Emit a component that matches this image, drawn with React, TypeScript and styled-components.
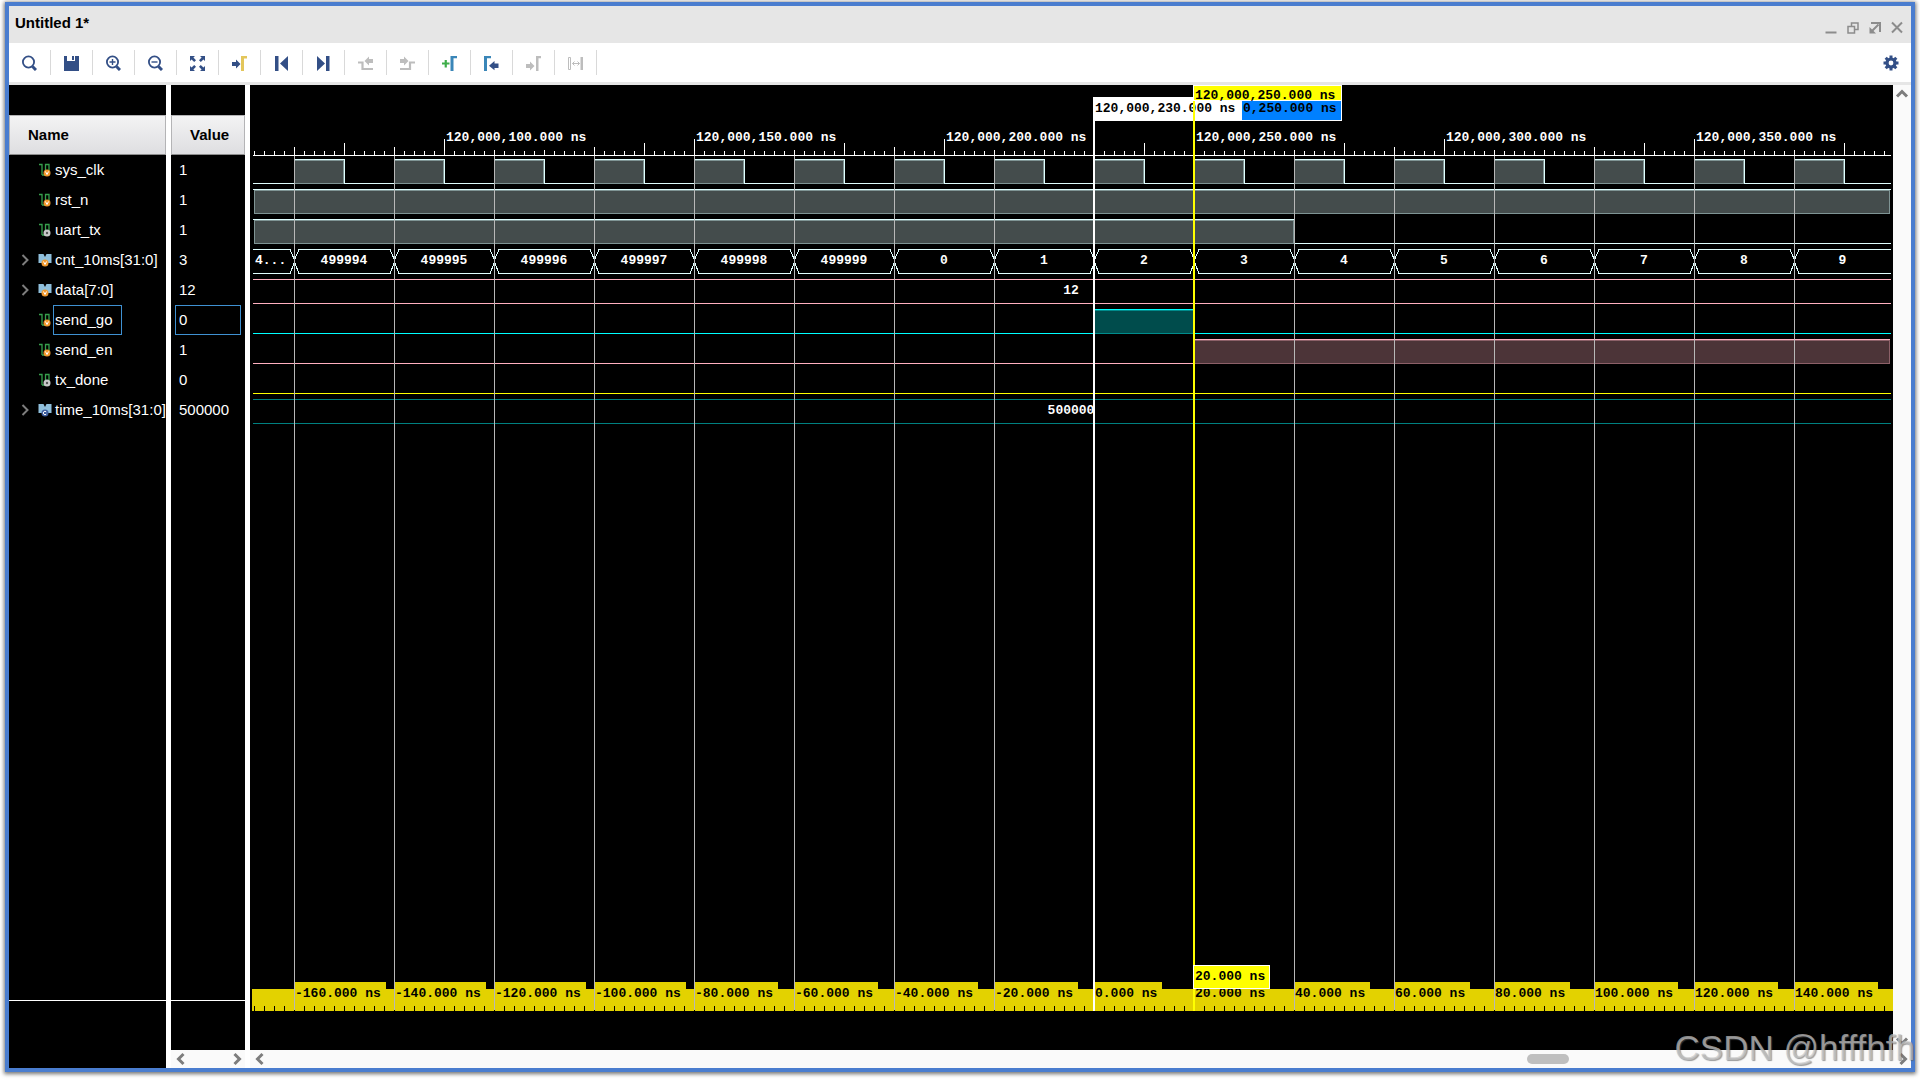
import React from "react";
import styled, { createGlobalStyle } from "styled-components";

const NAVY = "#334f86";
const GREY = "#bdbdbd";
const BLUE = "#3a86b8";

const GlobalStyle = createGlobalStyle`
  * { box-sizing: border-box; }
  body {
    margin: 0;
    background: #fff;
    font-family: "Liberation Sans", Arial, sans-serif;
    font-size: 15px;
    line-height: 20px;
    color: #000;
  }
  button {
    border: 0;
    padding: 0;
    background: none;
    display: flex;
    align-items: center;
    justify-content: center;
  }
`;

const Page = styled.div`
  height: 100vh;
  padding: 2px 5px 8px;
  overflow: hidden;
`;

const Window = styled.main`
  position: relative;
  display: flex;
  flex-direction: column;
  height: 100%;
  border: 4px solid #4a7dcf;
  box-shadow: 0 1px 4px 1px rgba(0, 0, 0, 0.55);
`;

const TitleBar = styled.header`
  display: flex;
  align-items: center;
  justify-content: space-between;
  height: 37px;
  flex: none;
  padding: 0 6px;
  background: #e6e6e6;
`;

const Title = styled.h1`
  margin: 0;
  padding-bottom: 4px;
  font-size: 15px;
  font-weight: bold;
`;

const Controls = styled.div`
  display: flex;
  gap: 6px;
  padding-top: 4px;
`;

const ControlButton = styled.button`
  width: 16px;
  height: 16px;
`;

const ToolBar = styled.div`
  display: flex;
  align-items: center;
  flex: none;
  height: 42px;
  background: #fff;
  border-bottom: 3px solid #e6e6e6;
`;

const ToolButton = styled.button`
  && {
    justify-content: flex-start;
    padding-left: 12px;
    border-right: 1px solid #d9d9d9;
  }
  width: 42px;
  height: 25px;
`;

const Spring = styled.div`
  flex: 1;
`;

const GearButton = styled.button`
  width: 16px;
  height: 25px;
  margin-right: 12px;
`;

const Body = styled.div`
  display: flex;
  flex: 1;
  min-height: 0;
  background: #fff;
`;

const SidePane = styled.section<{ $width: number }>`
  display: flex;
  flex-direction: column;
  flex: none;
  width: ${(p) => p.$width}px;
  margin-right: 5px;
  padding-top: 30px;
  background: #000;
  color: #fff;
`;

const ColumnHead = styled.h2<{ $indent: number }>`
  flex: none;
  height: 40px;
  margin: 0;
  padding-left: ${(p) => p.$indent}px;
  border: 1px solid #b4b4b6;
  border-bottom-color: #8c8c8c;
  background: linear-gradient(#f3f3f4, #dedee1);
  color: #000;
  font-size: 15px;
  line-height: 38px;
`;

const Rows = styled.ul`
  flex: 1;
  margin: 0;
  padding: 0;
  list-style: none;
`;

const NameRow = styled.li`
  display: flex;
  align-items: center;
  height: 30px;
  padding-left: 8px;
  white-space: nowrap;
`;

const Expander = styled.button`
  flex: none;
  width: 16px;
  height: 30px;
  margin-right: 5px;
`;

const Leaf = styled.span`
  flex: none;
  width: 21px;
`;

const SignalName = styled.span<{ $selected?: boolean }>`
  flex: none;
  height: 30px;
  margin-left: -1px;
  padding: 0 8px 0 1px;
  border: 1px solid ${(p) => (p.$selected ? "#3f91d2" : "transparent")};
  line-height: 28px;
`;

const ValueRow = styled.li<{ $selected?: boolean }>`
  height: 30px;
  margin: 0 4px;
  padding-left: 3px;
  border: 1px solid ${(p) => (p.$selected ? "#3f91d2" : "transparent")};
  line-height: 28px;
`;

const PaneFoot = styled.div<{ $height: number }>`
  flex: none;
  height: ${(p) => p.$height}px;
  border-top: 1px solid #fff;
`;

const HScroll = styled.div`
  display: flex;
  align-items: center;
  justify-content: space-between;
  flex: none;
  height: 18px;
  padding-left: 2px;
  background: #fafafa;
`;

const ScrollButton = styled.button`
  width: 16px;
  height: 18px;
`;

const Track = styled.div`
  display: flex;
  flex: 1;
`;

const Thumb = styled.div`
  width: 42px;
  height: 10px;
  margin-left: auto;
  margin-right: 326px;
  border-radius: 5px;
  background: #bfbfbf;
`;

const WavePane = styled.section`
  display: flex;
  flex-direction: column;
  flex: 1;
  min-width: 0;
`;

const WaveArea = styled.div`
  display: flex;
  flex: 1;
  min-height: 0;
`;

const Stage = styled.div`
  display: flex;
  flex-direction: column;
  flex: 1;
  min-width: 0;
  background: #000;
`;

const WaveSvg = styled.svg`
  display: block;
  flex: 1;
  width: 100%;
  min-height: 0;
  shape-rendering: crispEdges;
`;

const RulerSvg = styled.svg`
  display: block;
  flex: none;
  width: 100%;
  height: 90px;
  shape-rendering: crispEdges;
`;

const Mono = styled.text`
  font-family: "Liberation Mono", "Courier New", monospace;
  font-size: 13px;
  font-weight: bold;
  white-space: pre;
`;

const VScroll = styled.div`
  display: flex;
  flex-direction: column;
  justify-content: space-between;
  align-items: center;
  flex: none;
  width: 18px;
  background: #fafafa;
`;

const Watermark = styled.div`
  position: absolute;
  right: -4px;
  bottom: 0;
  font-size: 35px;
  line-height: 40px;
  color: rgba(200, 200, 200, 0.7);
  text-shadow: 1px 1px 1px rgba(90, 90, 90, 0.6);
  white-space: nowrap;
  pointer-events: none;
`;

const IconSvg = styled.svg`
  flex: none;
`;

const Icon = ({ children }: { children: React.ReactNode }) => (
  <IconSvg width="16" height="16" viewBox="0 0 16 16" fill="none" aria-hidden="true">
    {children}
  </IconSvg>
);

const Lens = ({ children }: { children?: React.ReactNode }) => (
  <Icon>
    <circle cx="7.5" cy="7" r="5.6" stroke={NAVY} strokeWidth="1.8" />
    <path d="M11.5 11.5L15 15" stroke={NAVY} strokeWidth="3" />
    {children}
  </Icon>
);

const tools: { label: string; icon: React.ReactNode }[] = [
  { label: "Search", icon: <Lens /> },
  {
    label: "Save",
    icon: (
      <Icon>
        <path d="M1 1h3v5h8V1h4v15H1z" fill={NAVY} />
        <path d="M9 1h2v4H9z" fill={NAVY} />
      </Icon>
    ),
  },
  { label: "Zoom in", icon: <Lens><path d="M4.5 7h6M7.5 4v6" stroke={NAVY} strokeWidth="1.4" /></Lens> },
  { label: "Zoom out", icon: <Lens><path d="M4.5 7h6" stroke={NAVY} strokeWidth="1.4" /></Lens> },
  {
    label: "Zoom fit",
    icon: (
      <Icon>
        <path d="M1 1h5L4.4 2.6 7 5.2 5.2 7 2.6 4.4 1 6zM16 1v5l-1.6-1.6L11.8 7 10 5.2l2.6-2.6L11 1zM1 16v-5l1.6 1.6L5.2 10 7 11.8l-2.6 2.6L6 16zM16 16h-5l1.6-1.6L10 11.8 11.8 10l2.6 2.6L16 11z" fill={NAVY} />
      </Icon>
    ),
  },
  {
    label: "Go to cursor",
    icon: (
      <Icon>
        <path d="M1 7h4V4.5L9.5 9 5 13.500V11H1z" fill={NAVY} />
        <path d="M10 16V1h6v2.500h-3V16z" fill="#e3c65b" />
      </Icon>
    ),
  },
  { label: "Go to start", icon: <Icon><path d="M2 1h3.500v15H2zM15 1v15L7 8.500z" fill={NAVY} /></Icon> },
  { label: "Go to end", icon: <Icon><path d="M11 1h3.500v15H11zM2 1v15l8-7.500z" fill={NAVY} /></Icon> },
  {
    label: "Previous transition",
    icon: (
      <Icon>
        <path d="M1 7.500h4.500V14H16" stroke={GREY} strokeWidth="2.200" />
        <path d="M16 4h-4V1.500L7.500 6l4.500 4.500V8h4z" fill={GREY} />
      </Icon>
    ),
  },
  {
    label: "Next transition",
    icon: (
      <Icon>
        <path d="M1 14h10V7.500h5" stroke={GREY} strokeWidth="2.200" />
        <path d="M1 4h4V1.500L9.500 6 5 10.500V8H1z" fill={GREY} />
      </Icon>
    ),
  },
  {
    label: "Add marker",
    icon: (
      <Icon>
        <path d="M1 8.500h7.500M4.750 5v7.500" stroke="#3fae4a" strokeWidth="2.200" />
        <path d="M9.500 16V1H16v2.200h-3.500V16z" fill={BLUE} />
      </Icon>
    ),
  },
  {
    label: "Previous marker",
    icon: (
      <Icon>
        <path d="M1 16V1h7v2.200H4V16z" fill={BLUE} />
        <path d="M15.500 8.500h-4V6L6 10.750l5.500 4.500V13h4z" fill={NAVY} />
      </Icon>
    ),
  },
  {
    label: "Next marker",
    icon: (
      <Icon>
        <path d="M1 9h4V6.500l4.500 4.500L5 15.500V13H1z" fill={GREY} />
        <path d="M11 16V1h5v2.200h-2.500V16z" fill={GREY} />
      </Icon>
    ),
  },
  {
    label: "Swap cursors",
    icon: (
      <Icon>
        <path d="M1.500 2.500h2v12h-2z" stroke={GREY} />
        <path d="M5.500 8.500h7M7.500 6.500l-2 2 2 2M10.500 6.500l2 2-2 2" stroke={GREY} />
        <path d="M13.500 2H16v13h-2.500z" fill={GREY} />
      </Icon>
    ),
  },
];

const gearTeeth = [0, 45, 90, 135, 180, 225, 270, 315];

const controls = [
  { label: "Minimize", d: "M2.500 13.500h11" },
  { label: "Restore", d: "M3 7.500h6.500V14H3zM6.500 7V4H13v6.500h-3" },
  { label: "Float", d: "M4 4h9v9M11.500 5.500L5 12" },
  { label: "Close", d: "M3 3.500l10 10M13 3.500l-10 10" },
];

const chevrons = {
  left: "M10.500 3L5.500 8l5 5",
  right: "M5.500 3l5 5-5 5",
  up: "M3 10.500l5-5 5 5",
  down: "M3 5.500l5 5 5-5",
};

const Chevron = ({ dir, width = 3 }: { dir: keyof typeof chevrons; width?: number }) => (
  <Icon>
    <path d={chevrons[dir]} stroke="#7d7d7d" strokeWidth={width} />
  </Icon>
);

type Badge = "v" | "o" | "c";

const badgeColor: Record<Badge, string> = { v: "#f29a2e", o: "#c9c9c9", c: "#3d5c9c" };

const SignalIcon = ({ bus, badge }: { bus?: boolean; badge: Badge }) => {
  const cx = bus ? 7 : 9;
  return (
    <Icon>
      {bus ? (
        <path d="M0.500 2h5L7 5l1.500-3h5v9h-13z" fill="#8fbfdc" />
      ) : (
        <path d="M1 2.500h3V13M7.500 13V2.500H11V10M4 13h3.500" stroke="#36a04c" strokeWidth="1.300" />
      )}
      <circle cx={cx} cy="11" r="3.500" fill={badgeColor[badge]} />
      {badge === "v" && <path d={`M${cx - 1.5} 9.500l1.500 3 1.500-3`} stroke="#fff" />}
      {badge === "o" && <circle cx={cx} cy="11" r="1.200" fill="#555" />}
      {badge === "c" && <path d={`M${cx + 1.2} 9.800a1.700 1.700 0 1 0 0 2.400`} stroke="#fff" />}
    </Icon>
  );
};

type Signal = { name: string; value: string; bus?: boolean; badge: Badge; selected?: boolean };

const signals: Signal[] = [
  { name: "sys_clk", value: "1", badge: "v" },
  { name: "rst_n", value: "1", badge: "v" },
  { name: "uart_tx", value: "1", badge: "o" },
  { name: "cnt_10ms[31:0]", value: "3", bus: true, badge: "v" },
  { name: "data[7:0]", value: "12", bus: true, badge: "v" },
  { name: "send_go", value: "0", badge: "v", selected: true },
  { name: "send_en", value: "1", badge: "v" },
  { name: "tx_done", value: "0", badge: "o" },
  { name: "time_10ms[31:0]", value: "500000", bus: true, badge: "c" },
];

/* Time scale: 5 px per ns, first clock edge (120,000,070 ns) at x = 44. */
const START_NS = 70;
const timeX = (ns: number) => 44 + (ns - START_NS) * 5;
const LEFT = 3;
const RIGHT = 1641;
const RULER_Y = 70;
const rowTop = (row: number) => 74 + row * 30;
const ROW_H = 24;

const gridTimes = Array.from({ length: 16 }, (_, i) => START_NS + i * 20);
const tickTimes = Array.from({ length: 164 }, (_, i) => 62 + i * 2);
const labelTimes = [100, 150, 200, 250, 300, 350];
const CURSOR = 230;
const MARKER = 250;

const tickTop = (ns: number) => {
  if (ns % 50 === 0) return 54;
  if (ns % 100 === 40 || ns % 100 === 80) return 58;
  if (ns === 70 || ns % 100 === 30 || ns % 100 === 90) return 62;
  return ns % 10 === 0 ? 65 : 66;
};

const Pulse = ({ row, x1, x2, line, edge, fill, closed = true }: {
  row: number; x1: number; x2: number; line: string; edge: string; fill: string; closed?: boolean;
}) => {
  const y = rowTop(row);
  return (
    <g>
      <rect x={x1} y={y} width={x2 - x1} height={ROW_H + 1} fill={edge} />
      <rect x={x1 + 1} y={y + 2} width={x2 - x1 - 2} height={ROW_H - 2} fill={fill} />
      <rect x={x1} y={y} width={x2 - x1} height="1" fill={line} />
      {!closed && <rect x={x2} y={y} width="1" height={ROW_H + 1} fill={line} />}
    </g>
  );
};

const HLine = ({ x1 = LEFT, x2 = RIGHT, y, color }: { x1?: number; x2?: number; y: number; color: string }) => (
  <rect x={x1} y={y} width={x2 - x1} height="1" fill={color} />
);

const PALE = "#e0ffff";
const PINK = "#ffb0c0";
const MINT = { line: PALE, edge: "#7f9494", fill: "#444c4c" };

const Waves = () => {
  const busTop = rowTop(3);
  const busBottom = busTop + ROW_H;
  const cursorX = timeX(CURSOR);
  const markerX = timeX(MARKER);
  return (
    <WaveSvg role="img" aria-label="Waveforms">
      <HLine y={RULER_Y} color="#fff" />
      {tickTimes.map((t) => (
        <rect key={t} x={timeX(t)} y={tickTop(t)} width="1" height={RULER_Y - tickTop(t)} fill="#fff" />
      ))}
      {labelTimes.map((t) => (
        <Mono key={t} x={timeX(t) + 2} y="56" fill="#fff">{`120,000,${t}.000 ns`}</Mono>
      ))}

      <HLine y={rowTop(0) + ROW_H} color={PALE} />
      {gridTimes.map((t) => (
        <Pulse key={t} row={0} x1={timeX(t)} x2={timeX(t + 10)} closed={false} {...MINT} />
      ))}
      <HLine y={rowTop(1)} color={PALE} />
      <Pulse row={1} x1={LEFT + 1} x2={RIGHT - 1} {...MINT} />
      <HLine y={rowTop(2)} x2={20} color={PALE} />
      <Pulse row={2} x1={LEFT + 1} x2={timeX(270)} {...MINT} />
      <HLine y={rowTop(2) + ROW_H} x1={timeX(270)} color={PALE} />

      <g fill="none" stroke={PALE}>
        <path d={`M${LEFT} ${busTop + 0.5}H${timeX(70) - 4}L${timeX(70) + 1} ${busTop + 12}L${timeX(70) - 4} ${busBottom + 0.5}H${LEFT}`} />
        {gridTimes.slice(0, -1).map((t) => {
          const a = timeX(t);
          const b = timeX(t + 20);
          return (
            <path key={t} d={`M${a} ${busTop + 12}L${a + 5} ${busTop + 0.5}H${b - 4}L${b + 1} ${busTop + 12}L${b - 4} ${busBottom + 0.5}H${a + 5}Z`} />
          );
        })}
        <path d={`M${RIGHT} ${busTop + 0.5}H${timeX(370) + 5}L${timeX(370)} ${busTop + 12}L${timeX(370) + 5} ${busBottom + 0.5}H${RIGHT}`} />
      </g>
      <Mono x="5" y={busTop + 15} fill="#fff">4...</Mono>
      {gridTimes.map((t, i) => (
        <Mono key={t} x={(timeX(t) + Math.min(timeX(t + 20), RIGHT)) / 2} y={busTop + 15} fill="#fff" textAnchor="middle">
          {i < 6 ? 499994 + i : i - 6}
        </Mono>
      ))}

      <HLine y={rowTop(4)} color={PINK} />
      <HLine y={rowTop(4) + ROW_H} color={PINK} />
      <Mono x="821" y={rowTop(4) + 15} fill="#fff" textAnchor="middle">12</Mono>

      <HLine y={rowTop(5) + ROW_H} color="#00ffff" />
      <Pulse row={5} x1={cursorX} x2={markerX} line="#00ffff" edge="#008c8c" fill="#004c4c" />

      <HLine y={rowTop(6) + ROW_H} x2={markerX} color={PINK} />
      <Pulse row={6} x1={markerX} x2={RIGHT - 1} line={PINK} edge="#8c6068" fill="#4c3438" />

      <HLine y={rowTop(7) + ROW_H} color="#ffff00" />
      <HLine y={rowTop(8)} color="#008080" />
      <HLine y={rowTop(8) + ROW_H} color="#008080" />
      <Mono x="821" y={rowTop(8) + 15} fill="#fff" textAnchor="middle">500000</Mono>

      {gridTimes.map((t) => (
        <rect key={t} x={timeX(t)} y={RULER_Y + 1} width="1" height="100%" fill="#b8b8b8" />
      ))}

      <rect x={markerX} y="16" width="148" height="20" fill="#fff" />
      <rect x={markerX} y="16" width="147" height="19" fill="#0080ff" />
      <rect x={cursorX - 1} y="12" width="149" height="24" fill="#fff" />
      <rect x={cursorX - 1} y="12" width="2" height="100%" fill="#fff" />
      <Mono x={markerX + 49} y="27" fill="#000">0,250.000 ns</Mono>
      <Mono x={cursorX + 1} y="27" fill="#000">120,000,230.000 ns</Mono>
      <rect x={markerX - 1} y="16" width="2" height="100%" fill="#ff0" />
      <rect x={markerX - 1} y="0" width="149" height="16" fill="#fff" />
      <rect x={markerX} y="1" width="147" height="14" fill="#ff0" />
      <Mono x={markerX + 1} y="14" fill="#000">120,000,250.000 ns</Mono>
    </WaveSvg>
  );
};

const DeltaRuler = () => {
  const cursorX = timeX(CURSOR);
  const markerX = timeX(MARKER);
  return (
    <RulerSvg role="img" aria-label="Time relative to cursor">
      <rect x="2" y="29" width="100%" height="22" fill="#e3d200" />
      {tickTimes.map((t) => (
        <rect key={t} x={timeX(t)} y="46" width="1" height="5" fill="#000" />
      ))}
      {gridTimes.map((t) => {
        const label = `${t - CURSOR}.000 ns`;
        return (
          <g key={t}>
            <rect x={timeX(t)} y="22" width={label.length * 8 + 4} height="23" fill="#e3d200" />
            <rect x={timeX(t)} y="0" width="1" height="50" fill="#b8b8b8" />
            <Mono x={timeX(t) + 1} y="37" fill="#000">{label}</Mono>
          </g>
        );
      })}
      <rect x={cursorX - 1} y="0" width="2" height="51" fill="#fff" />
      <rect x={markerX - 1} y="0" width="2" height="51" fill="#ff0" />
      <rect x={markerX - 1} y="5" width="77" height="24" fill="#fff" />
      <rect x={markerX} y="6" width="75" height="22" fill="#ff0" />
      <Mono x={markerX + 1} y="20" fill="#000">20.000 ns</Mono>
    </RulerSvg>
  );
};

export default function App() {
  return (
    <Page>
      <GlobalStyle />
      <Window>
        <TitleBar>
          <Title>Untitled 1*</Title>
          <Controls>
            {controls.map((c) => (
              <ControlButton key={c.label} aria-label={c.label}>
                <Icon>
                  <path d={c.d} stroke="#8c8c8c" strokeWidth={c.label === "Restore" ? 1.5 : 2} />
                  {c.label === "Float" && <path d="M2.500 8v6.500H9z" fill="#8c8c8c" />}
                </Icon>
              </ControlButton>
            ))}
          </Controls>
        </TitleBar>

        <ToolBar role="toolbar">
          {tools.map((t) => (
            <ToolButton key={t.label} aria-label={t.label}>{t.icon}</ToolButton>
          ))}
          <Spring />
          <GearButton aria-label="Settings">
            <Icon>
              <circle cx="8" cy="8" r="4" stroke={NAVY} strokeWidth="3.200" />
              {gearTeeth.map((a) => (
                <path key={a} d="M6.500 0.500h3v3h-3z" fill={NAVY} transform={`rotate(${a} 8 8)`} />
              ))}
            </Icon>
          </GearButton>
        </ToolBar>

        <Body>
          <SidePane $width={157}>
            <ColumnHead $indent={18}>Name</ColumnHead>
            <Rows>
              {signals.map((s) => (
                <NameRow key={s.name}>
                  {s.bus ? (
                    <Expander aria-label={`Expand ${s.name}`}><Chevron dir="right" width={2} /></Expander>
                  ) : (
                    <Leaf />
                  )}
                  <SignalIcon bus={s.bus} badge={s.badge} />
                  <SignalName $selected={s.selected}>{s.name}</SignalName>
                </NameRow>
              ))}
            </Rows>
            <PaneFoot $height={68} />
          </SidePane>

          <SidePane $width={74}>
            <ColumnHead $indent={18}>Value</ColumnHead>
            <Rows>
              {signals.map((s) => (
                <ValueRow key={s.name} $selected={s.selected}>{s.value}</ValueRow>
              ))}
            </Rows>
            <PaneFoot $height={50} />
            <HScroll>
              <ScrollButton aria-label="Scroll values left"><Chevron dir="left" /></ScrollButton>
              <ScrollButton aria-label="Scroll values right"><Chevron dir="right" /></ScrollButton>
            </HScroll>
          </SidePane>

          <WavePane>
            <WaveArea>
              <Stage>
                <Waves />
                <DeltaRuler />
              </Stage>
              <VScroll>
                <ScrollButton aria-label="Scroll up"><Chevron dir="up" /></ScrollButton>
                <ScrollButton aria-label="Scroll down"><Chevron dir="down" /></ScrollButton>
              </VScroll>
            </WaveArea>
            <HScroll>
              <ScrollButton aria-label="Scroll left"><Chevron dir="left" /></ScrollButton>
              <Track><Thumb /></Track>
              <ScrollButton aria-label="Scroll right"><Chevron dir="right" /></ScrollButton>
            </HScroll>
          </WavePane>
        </Body>
        <Watermark>CSDN @hfffhfh</Watermark>
      </Window>
    </Page>
  );
}
